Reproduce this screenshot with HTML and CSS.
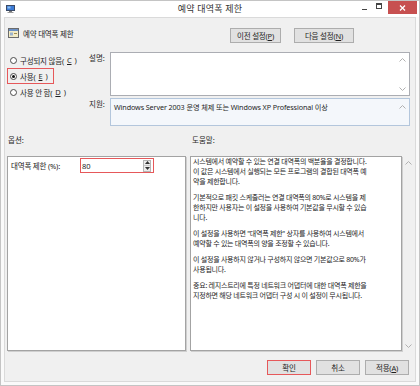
FILE: index.html
```html
<!DOCTYPE html>
<html lang="ko">
<head>
  <meta charset="UTF-8" />
  <title>예약 대역폭 제한</title>
  <link rel="stylesheet" href="styles.css">
</head>
<body>

<div class="window">
  <div class="titlebar">
    <div class="title-left">
      <svg class="app-icon" width="9" height="8" viewBox="0 0 9 8">
        <rect x="0.5" y="0.5" width="8" height="5" fill="#3b7bd6" stroke="#3a4a66"/>
        <rect x="1.5" y="1.5" width="3" height="2" fill="#8fc0f0"/>
        <rect x="3" y="6" width="3" height="1" fill="#7a7a7a"/>
        <rect x="1.5" y="7" width="6" height="1" fill="#9a9a9a"/>
      </svg>
    </div>
    <div class="title">예약 대역폭 제한</div>
    <div class="title-controls">
      <span class="ctl ctl-min"><span class="dash"></span></span>
      <span class="ctl ctl-max"><span class="box"></span></span>
      <span class="ctl ctl-close">
        <svg width="7" height="6" viewBox="0 0 7 6">
          <path d="M1 0.5 L6 5.5 M6 0.5 L1 5.5" stroke="#fff" stroke-width="1.3"/>
        </svg>
      </span>
    </div>
  </div>

  <div class="client">
    <div class="top-row">
      <div class="setting-name">
        <svg width="11" height="10" viewBox="0 0 11 10">
          <rect x="0.5" y="0.5" width="10" height="9" fill="#f3ecc6" stroke="#6b6b6b"/>
          <rect x="1" y="1" width="9" height="2" fill="#6a8fc4"/>
          <rect x="2" y="4.5" width="3" height="3" fill="#9db3cc"/>
          <rect x="6" y="5" width="3" height="1" fill="#a08a50"/>
        </svg>
        <span>예약 대역폭 제한</span>
      </div>
      <div class="nav-buttons">
        <button class="btn btn-prev">이전 설정(<u>P</u>)</button>
        <button class="btn btn-next">다음 설정(<u>N</u>)</button>
      </div>
    </div>

    <div class="state-grid">
      <div class="radios">
        <label class="radio-row"><span class="radio"></span>구성되지 않음(<u>C</u>)</label>
        <label class="radio-row marked"><span class="radio checked"></span>사용(<u>E</u>)</label>
        <label class="radio-row"><span class="radio"></span>사용 안 함(<u>D</u>)</label>
      </div>
      <div class="field-label">설명:</div>
      <div class="textbox desc-box">
        <div class="vscroll">
          <svg width="7" height="4" viewBox="0 0 7 4"><polyline points="0.5,3.5 3.5,0.5 6.5,3.5" fill="none" stroke="#b0b0b0"/></svg>
          <svg width="7" height="4" viewBox="0 0 7 4"><polyline points="0.5,0.5 3.5,3.5 6.5,0.5" fill="none" stroke="#b0b0b0"/></svg>
        </div>
      </div>
      <div class="field-label">지원:</div>
      <div class="textbox support-box">
        <span class="support-text">Windows Server 2003 운영 체제 또는 Windows XP Professional 이상</span>
        <div class="vscroll">
          <svg width="7" height="4" viewBox="0 0 7 4"><polyline points="0.5,3.5 3.5,0.5 6.5,3.5" fill="none" stroke="#b0b0b0"/></svg>
        </div>
      </div>
    </div>

    <div class="section-labels">
      <span class="label-options">옵션:</span>
      <span class="label-help">도움말:</span>
    </div>

    <div class="panels">
      <div class="options-panel">
        <div class="option-row">
          <span class="option-label">대역폭 제한 (%):</span>
          <div class="spinner">
            <span class="spin-value">80</span>
            <span class="spin-buttons">
              <span class="spin-half"><svg width="5" height="3" viewBox="0 0 5 3"><polygon points="0,3 2.5,0 5,3" fill="#333"/></svg></span>
              <span class="spin-half"><svg width="5" height="3" viewBox="0 0 5 3"><polygon points="0,0 2.5,3 5,0" fill="#333"/></svg></span>
            </span>
          </div>
        </div>
      </div>

      <div class="help-wrap">
        <div class="help-panel">
          <p>시스템에서 예약할 수 있는 연결 대역폭의 백분율을 결정합니다.<br>이 값은 시스템에서 실행되는 모든 프로그램의 결합된 대역폭 예<br>약을 제한합니다.</p>
          <p>기본적으로 패킷 스케줄러는 연결 대역폭의 80%로 시스템을 제<br>한하지만 사용자는 이 설정을 사용하여 기본값을 무시할 수 있습<br>니다.</p>
          <p>이 설정을 사용하면 "대역폭 제한" 상자를 사용하여 시스템에서<br>예약할 수 있는 대역폭의 양을 조정할 수 있습니다.</p>
          <p>이 설정을 사용하지 않거나 구성하지 않으면 기본값으로 80%가<br>사용됩니다.</p>
          <p>중요: 레지스트리에 특정 네트워크 어댑터에 대한 대역폭 제한을<br>지정하면 해당 네트워크 어댑터 구성 시 이 설정이 무시됩니다.</p>
        </div>
        <div class="help-scroll">
          <svg width="7" height="4" viewBox="0 0 7 4"><polyline points="0.5,3.5 3.5,0.5 6.5,3.5" fill="none" stroke="#b0b0b0"/></svg>
          <svg width="7" height="4" viewBox="0 0 7 4"><polyline points="0.5,0.5 3.5,3.5 6.5,0.5" fill="none" stroke="#b0b0b0"/></svg>
        </div>
      </div>
    </div>

    <div class="footer">
      <button class="btn btn-foot focused">확인</button>
      <button class="btn btn-foot">취소</button>
      <button class="btn btn-foot">적용(<u>A</u>)</button>
    </div>
  </div>
</div>

</body>
</html>
```

FILE: styles.css
```css
body { margin: 0; font-family: "Noto Sans", "Noto Sans CJK KR", sans-serif; font-size: 7.5px; color: #1e1e1e; background: #fff; }
u { text-decoration: underline; text-underline-offset: 1px; }

.window { width: 420px; height: 386px; box-sizing: border-box; border: 1px solid #c4c4c4; background: #fafafa; display: flex; flex-direction: column; }

/* title bar */
.titlebar { height: 16px; display: grid; grid-template-columns: 1fr auto 1fr; background: #fff; }
.title-left { padding: 4px 0 0 5px; }
.app-icon { display: block; }
.title { font-size: 9px; line-height: 15px; color: #333; letter-spacing: 0.2px; }
.title-controls { display: flex; justify-content: flex-end; align-items: flex-start; padding-right: 2px; }
.ctl { display: flex; align-items: center; justify-content: center; height: 13px; }
.ctl-min { width: 14px; }
.ctl-min .dash { width: 5px; height: 1px; background: #444; margin-top: 4px; }
.ctl-max { width: 15px; margin-right: 2px; }
.ctl-max .box { width: 4px; height: 3px; border: 1px solid #444; border-top-width: 2px; margin-top: -3px; }
.ctl-close { width: 29px; background: #c75050; }
.ctl-close svg { display: block; }

/* client area */
.client { flex: 1; margin: 0 3px 3px 3px; border: 1px solid #dadada; background: #f0f0f0; display: flex; flex-direction: column; }

.top-row { height: 34px; box-sizing: border-box; padding: 10px 61px 0 3px; display: flex; align-items: flex-start; }
.setting-name { display: flex; align-items: center; gap: 4px; height: 10px; letter-spacing: -0.2px; }
.setting-name svg { display: block; }
.nav-buttons { margin-left: auto; display: flex; gap: 13px; }

.btn { font: inherit; font-size: 7.5px; color: #1e1e1e; background: #e1e1e1; border: 1px solid #adadad; height: 15px; padding: 0; line-height: 12px; box-sizing: border-box; letter-spacing: -0.2px; white-space: nowrap; }
.btn-prev { width: 51px; }
.btn-next { width: 60px; }

/* state + description */
.state-grid { height: 74px; display: grid; grid-template-columns: 84px 21px 300px; grid-template-rows: 44px 28px; row-gap: 2px; }
.radios { grid-row: 1 / 3; padding-left: 2px; display: flex; flex-direction: column; align-items: flex-start; }
.radio-row { display: flex; align-items: center; gap: 3px; height: 16px; box-sizing: border-box; padding: 0 5px 0 2px; border: 1px solid transparent; letter-spacing: -0.2px; white-space: nowrap; }
.radio-row.marked { border-color: #e6585a; }
.radio { flex: none; width: 7px; height: 7px; box-sizing: border-box; border: 1px solid #4a4a4a; border-radius: 50%; background: #fff; display: flex; align-items: center; justify-content: center; }
.radio.checked::after { content: ""; width: 3px; height: 3px; border-radius: 50%; background: #111; }

.field-label { line-height: 10px; padding-top: 1px; color: #2a2a2a; }
.textbox { border: 1px solid #abadb3; background: #fff; display: flex; justify-content: flex-end; }
.vscroll { width: 13px; display: flex; flex-direction: column; justify-content: space-between; align-items: center; padding: 5px 0 4px; }
.vscroll svg { display: block; }
.support-box { background: #f4f7fb; border-color: #b3c6dc; }
.support-text { flex: 1; padding: 3px 0 0 3px; font-size: 7.2px; line-height: 10px; white-space: nowrap; letter-spacing: -0.1px; }
.support-box .vscroll { justify-content: flex-start; padding-top: 6px; }

/* options / help */
.section-labels { height: 30px; box-sizing: border-box; padding: 9px 0 0 3px; line-height: 10px; display: flex; color: #2a2a2a; }
.label-options { width: 184px; }

.panels { height: 195px; display: flex; padding-left: 2px; gap: 4px; }
.options-panel { width: 179px; box-sizing: border-box; border: 1px solid #a3a3a3; box-shadow: 1px 1px 0 #cfcfcf; background: #fff; padding: 1px 0 0 3px; }
.option-row { display: flex; align-items: center; }
.option-label { width: 69px; letter-spacing: -0.2px; }
.spinner { width: 74px; height: 15px; box-sizing: border-box; border: 1px solid #e6585a; background: #fff; display: flex; align-items: center; padding: 0 2px 0 1px; }
.spin-value { flex: 1; font-size: 7.5px; }
.spin-buttons { width: 8px; height: 12px; box-sizing: border-box; border: 1px solid #b5b5b5; background: #ececec; display: flex; flex-direction: column; }
.spin-half { flex: 1; display: flex; align-items: center; justify-content: center; }
.spin-half + .spin-half { border-top: 1px solid #c9c9c9; }
.spin-half svg { display: block; }

.help-wrap { display: flex; }
.help-panel { width: 212px; box-sizing: border-box; border: 1px solid #a3a3a3; box-shadow: 1px 1px 0 #cfcfcf; background: #fff; padding: 0 0 0 2px; overflow: hidden; font-size: 7px; line-height: 10px; letter-spacing: -0.25px; white-space: nowrap; }
.help-panel p { margin: 0 0 6px; }
.help-scroll { width: 13px; display: flex; flex-direction: column; justify-content: space-between; align-items: center; padding: 5px 0 3px; }
.help-scroll svg { display: block; }

.footer { flex: 1; display: flex; justify-content: flex-end; align-items: flex-start; gap: 5px; padding: 9px 6px 0 0; }
.btn-foot { width: 44px; }
.btn.focused { border-color: #e6585a; }
```
